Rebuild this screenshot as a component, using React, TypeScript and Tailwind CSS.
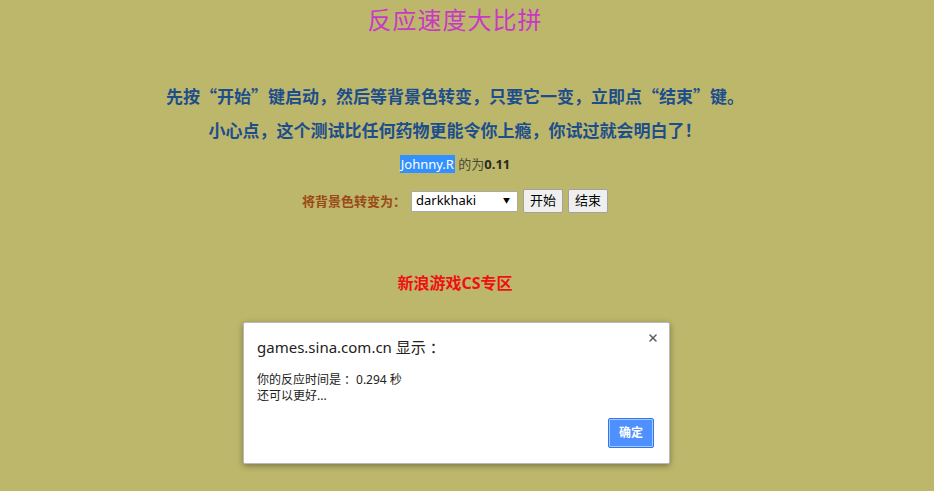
import { X } from 'lucide-react';

const latin = "font-['Noto_Sans','Noto_Sans_CJK_SC',sans-serif]";
const han = "font-['Noto_Sans_CJK_SC','Noto_Sans',sans-serif]";

function AlertDialog() {
  return (
    <div className={`absolute left-[243px] top-[322px] w-[427px] h-[142px] bg-white rounded-[2px] border border-[#b9b9b9] shadow-[0_2px_6px_rgba(0,0,0,0.35)] text-left ${latin}`}>
      <button className="absolute right-[10px] top-[9px] text-[#5a5a5a]">
        <X size={12} strokeWidth={3} />
      </button>
      <div className="pl-[13px] pt-[14px] text-[15px] leading-[20px] text-[#222]">
        games.sina.com.cn 显示 <span className={han}>：</span>
      </div>
      <div className="pl-[13px] pt-[14px] text-[12px] leading-[16px] text-[#222]">
        <div>你的反应时间是<span className={`${han} ml-[3px]`}>：</span>0.294 秒</div>
        <div>还可以更好...</div>
      </div>
      <button className="absolute right-[15px] bottom-[15px] w-[46px] h-[30px] rounded-[2px] bg-[#4d90fe] border border-[#3079ed] text-white text-[12px] font-bold shadow-[0_0_0_1px_rgba(255,255,255,0.5)_inset]">
        确定
      </button>
    </div>
  );
}

export default function App() {
  return (
    <div className={`relative w-full min-h-screen h-[491px] bg-[#bdb76b] overflow-hidden ${latin}`}>
      <div className="w-[910px] text-center">
        <h1 className="pt-[6px] text-[24px] leading-[28px] text-[#c837c8] tracking-[1px]">反应速度大比拼</h1>

        <div className={`mt-[45px] text-[17px] leading-[34px] font-bold text-[#1d4e8c] ${han}`}>
          <p>先按“开始”键启动，然后等背景色转变，只要它一变，立即点“结束”键。</p>
          <p>小心点，这个测试比任何药物更能令你上瘾，你试过就会明白了！</p>
        </div>

        <p className="text-[13px] leading-[34px] text-[#4a4a3a]">
          <span className="bg-[#3390ff] text-white px-[1px]">Johnny.R</span> 的为<b className="text-[#2a2a20]">0.11</b>
        </p>

        <div className="mt-[8px] flex items-center justify-center gap-[5px] text-[13px]">
          <span className={`font-bold text-[#9b4a16] ${han}`}>将背景色转变为：</span>
          <div className="flex items-center justify-between w-[107px] h-[21px] bg-white border border-[#a9a9a9] pl-[4px] pr-[7px] text-[13px] text-black">
            <span>darkkhaki</span>
            <span className="text-[7px]">▼</span>
          </div>
          <button className="h-[24px] px-[6px] bg-[#efefef] border border-[#a0a0a0] rounded-[2px] text-[13px] text-black">开始</button>
          <button className="h-[24px] px-[6px] bg-[#efefef] border border-[#a0a0a0] rounded-[2px] text-[13px] text-black">结束</button>
        </div>

        <p className="mt-[58px] text-[16px] leading-[24px] font-bold text-[#f01010]">新浪游戏CS专区</p>
      </div>

      <AlertDialog />
    </div>
  );
}
